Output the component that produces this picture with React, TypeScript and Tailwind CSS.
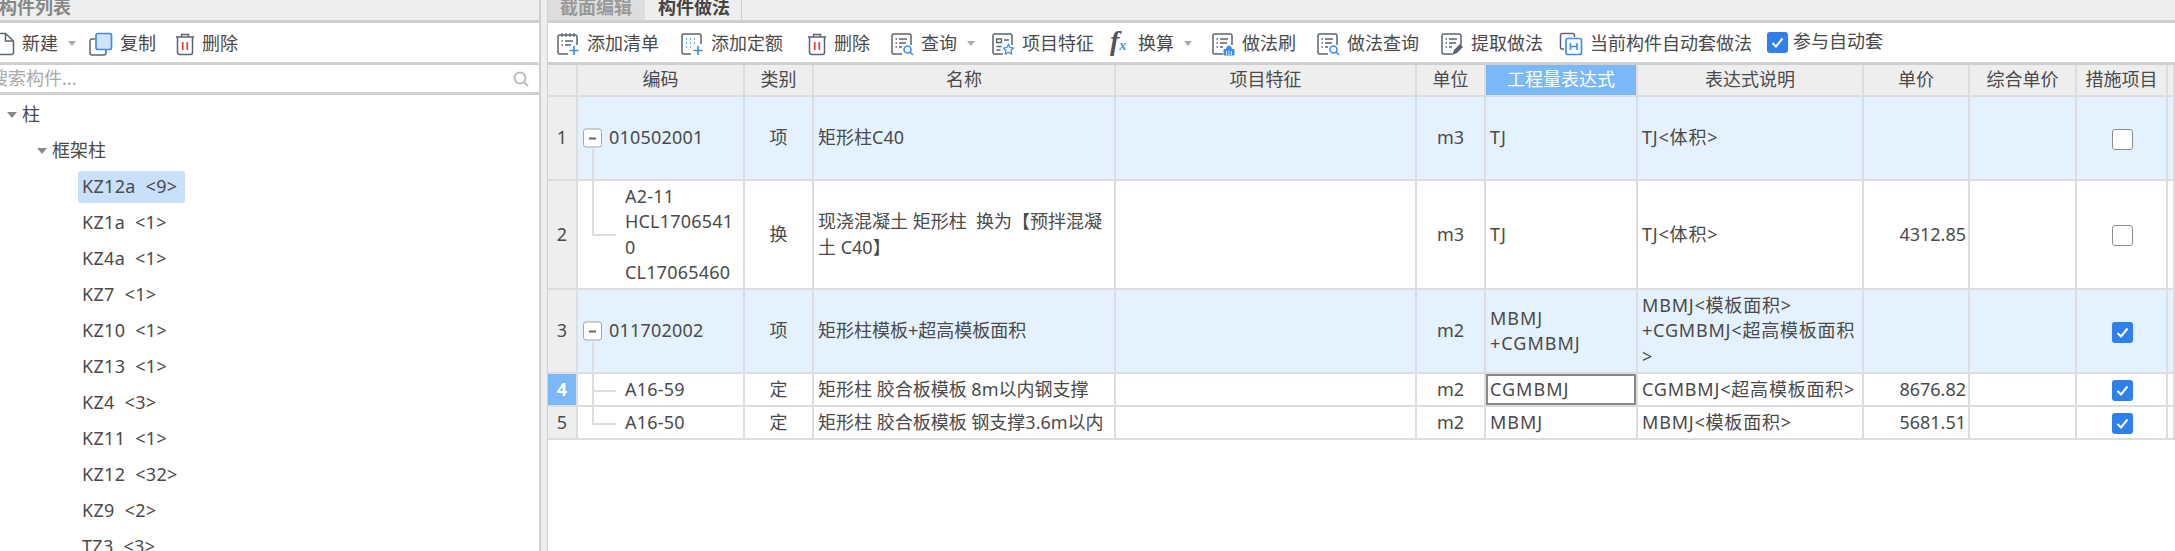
import React from "react";

const G = "#5b6472";
const B = "#3d8ef0";

function Doc({ children }: { children?: React.ReactNode }) {
  return (
    <svg width="24" height="24" viewBox="0 0 24 24" fill="none" strokeWidth="1.5" className="shrink-0">
      <path d="M12 22H3.500A1.500 1.500 0 0 1 2 20.500V3.500A1.500 1.500 0 0 1 3.500 2h16A1.500 1.500 0 0 1 21 3.500V13" stroke={G} />
      {children}
    </svg>
  );
}

const Lines = () => (
  <path d="M5.500 7h1.500M9 7h8M5.500 11h1.500M9 11h7M5.500 15h1.500M9 15h3" stroke={G} strokeWidth="1.300" />
);
const Plus = () => <path d="M18 14v9M13.500 18.500h9" stroke={B} strokeWidth="1.700" />;
const Search = () => (
  <g stroke={B} strokeWidth="1.600">
    <circle cx="17.500" cy="17.500" r="3.500" fill="#fff" />
    <path d="M20 20l3 3" />
  </g>
);

function IconAddList() {
  return (
    <svg width="24" height="24" viewBox="0 0 24 24" fill="none" strokeWidth="1.500" className="shrink-0">
      <path d="M12 22H3.500A1.500 1.500 0 0 1 2 20.500V4.500A1.500 1.500 0 0 1 3.500 3h16A1.500 1.500 0 0 1 21 4.500V13" stroke={G} />
      <path d="M6 1v4M10 1v4M14 1v4M18 1v4" stroke={G} strokeWidth="1.200" />
      <path d="M5.500 9h1.500M9 9h8M5.500 13h1.500M9 13h6" stroke={G} strokeWidth="1.300" />
      <Plus />
    </svg>
  );
}
function IconAddQuota() {
  return (
    <svg width="24" height="24" viewBox="0 0 24 24" fill="none" strokeWidth="1.500" className="shrink-0">
      <path d="M11 22H3.500A1.500 1.500 0 0 1 2 20.500V3.500A1.500 1.500 0 0 1 3.500 2h16A1.500 1.500 0 0 1 21 3.500V12" stroke={G} />
      <path d="M6 7h1M10 7h1M14 7h1M6 11h1M10 11h1M14 11h1M6 15h1M10 15h1" stroke={B} strokeWidth="1.400" />
      <Plus />
    </svg>
  );
}
function IconTrash() {
  return (
    <svg width="20" height="24" viewBox="0 0 20 24" fill="none" className="shrink-0">
      <path d="M1 5h18M6.500 5V2.500h7V5" stroke={G} strokeWidth="1.500" />
      <path d="M2.500 5v15.500A2 2 0 0 0 4.500 22.500h11a2 2 0 0 0 2-2V5" stroke={G} strokeWidth="1.500" />
      <path d="M7.700 10v8M12.300 10v8" stroke="#ea3b3b" strokeWidth="1.700" />
    </svg>
  );
}
function IconQuery() {
  return (
    <Doc>
      <Lines />
      <Search />
    </Doc>
  );
}
function IconFeature() {
  return (
    <Doc>
      <path d="M5.500 7h5v3.500h-5zM13 8h5M5.500 14.500h5M5.500 18h4" stroke={G} strokeWidth="1.300" />
      <path d="M17.500 12.500l1.600 3 3.400.6-2.400 2.400.5 3.400-3.100-1.500-3.100 1.500.5-3.400-2.400-2.400 3.400-.6z" stroke={B} strokeWidth="1.300" fill="#fff" />
    </Doc>
  );
}
function IconBrush() {
  return (
    <Doc>
      <Lines />
      <path d="M13 17.500h10V23H13zM15.500 17.500c0-2 1-3.500 2.500-3.500s2.500 1.500 2.500 3.500" fill={B} stroke={B} strokeWidth="1" />
      <path d="M15.500 19v4M18 19v4M20.500 19v4" stroke="#fff" strokeWidth=".8" />
    </Doc>
  );
}
function IconExtract() {
  return (
    <Doc>
      <Lines />
      <path d="M12 23l2-5 6-6 3 3-6 6z" fill={G} />
    </Doc>
  );
}
function IconAuto() {
  return (
    <svg width="24" height="24" viewBox="0 0 24 24" fill="none" className="shrink-0">
      <path d="M5 17H3A1.500 1.500 0 0 1 1.500 15.500V3A1.500 1.500 0 0 1 3 1.500h11A1.500 1.500 0 0 1 15.500 3V5" stroke={G} strokeWidth="1.500" />
      <rect x="7" y="6.500" width="15.500" height="16" rx="2" fill="#fff" stroke={B} strokeWidth="1.700" />
      <path d="M11.500 11v7M18 11v7M11.500 14.500H18" stroke={B} strokeWidth="1.600" />
    </svg>
  );
}
function IconNew() {
  return (
    <svg width="24" height="24" viewBox="0 0 24 24" fill="none" className="shrink-0">
      <path d="M3 1.500h11.500L22.500 9v11.500a2 2 0 0 1-2 2H3zM14.500 1.500V9h8" stroke={G} strokeWidth="1.500" />
    </svg>
  );
}
function IconCopy() {
  return (
    <svg width="24" height="24" viewBox="0 0 24 24" fill="none" className="shrink-0">
      <path d="M6 7H3a2 2 0 0 0-2 2v12a2 2 0 0 0 2 2h12a2 2 0 0 0 2-2v-3" stroke={G} strokeWidth="1.500" />
      <rect x="7" y="1.500" width="15.500" height="16" rx="2" fill="#cfe3fb" stroke={B} strokeWidth="1.700" />
    </svg>
  );
}

function Caret() {
  return (
    <svg width="8" height="5" viewBox="0 0 8 5" className="shrink-0 ml-[3px]">
      <path d="M0 0h8L4 5z" fill="#aaaaaa" />
    </svg>
  );
}

function Check() {
  return (
    <span className="inline-flex items-center justify-center w-[21px] h-[21px] rounded-[3px] bg-[#2f80ed] align-middle">
      <svg width="15" height="15" viewBox="0 0 15 15" fill="none">
        <path d="M2.500 8l3.500 3.500L12.500 3.500" stroke="#fff" strokeWidth="2" />
      </svg>
    </span>
  );
}
function Uncheck() {
  return <span className="inline-block w-[21px] h-[21px] rounded-[3px] bg-white border border-[#8c8c8c] align-middle" />;
}

function Tool({ icon, label, caret, className }: { icon: React.ReactNode; label: string; caret?: boolean; className?: string }) {
  return (
    <div className={`flex items-center gap-[7px] ${className ?? ""}`}>
      {icon}
      <span className="whitespace-nowrap">{label}</span>
      {caret && <Caret />}
    </div>
  );
}

function Expand() {
  return (
    <span className="absolute left-[5px] top-1/2 -translate-y-1/2 w-[19px] h-[19px] rounded-[3px] border border-[#a5a5a5] bg-white flex items-center justify-center">
      <span className="w-[7px] h-[2px] bg-[#666666]" />
    </span>
  );
}

const cols = [30, 167, 69, 302, 301, 69, 152, 226, 106, 107, 91, 7];
const heads = ["", "编码", "类别", "名称", "项目特征", "单位", "工程量表达式", "表达式说明", "单价", "综合单价", "措施项目", ""];

type Row = {
  h: string;
  blue: boolean;
  n: number;
  code: React.ReactNode;
  child: boolean;
  type: string;
  name: React.ReactNode;
  unit: string;
  expr: React.ReactNode;
  desc: React.ReactNode;
  price: string;
  checked: boolean;
  lines: React.ReactNode;
  selected?: boolean;
};

const rows: Row[] = [
  {
    h: "h-[84px]", blue: true, n: 1, code: "010502001", child: false, type: "项", name: "矩形柱C40", unit: "m3", expr: "TJ", desc: "TJ<体积>", price: "", checked: false,
    lines: <span className="absolute left-[14px] top-[52px] bottom-0 w-[2px] bg-[#dddddd]" />,
  },
  {
    h: "h-[109px]", blue: false, n: 2,
    code: <>A2-11<br />HCL1706541<br />0<br />CL17065460</>,
    child: true, type: "换",
    name: <>现浇混凝土 矩形柱&nbsp; 换为【预拌混凝<br />土 C40】</>,
    unit: "m3", expr: "TJ", desc: "TJ<体积>", price: "4312.85", checked: false,
    lines: (
      <>
        <span className="absolute left-[14px] top-0 h-[53px] w-[2px] bg-[#dddddd]" />
        <span className="absolute left-[14px] top-[53px] w-[24px] h-[2px] bg-[#dddddd]" />
      </>
    ),
  },
  {
    h: "h-[84px]", blue: true, n: 3, code: "011702002", child: false, type: "项", name: "矩形柱模板+超高模板面积", unit: "m2",
    expr: <>MBMJ<br />+CGMBMJ</>,
    desc: <>MBMJ&lt;模板面积&gt;<br />+CGMBMJ&lt;超高模板面积<br />&gt;</>,
    price: "", checked: true,
    lines: <span className="absolute left-[14px] top-[52px] bottom-0 w-[2px] bg-[#dddddd]" />,
  },
  {
    h: "h-[33px]", blue: false, n: 4, code: "A16-59", child: true, type: "定", name: "矩形柱 胶合板模板 8m以内钢支撑", unit: "m2", expr: "CGMBMJ", desc: "CGMBMJ<超高模板面积>", price: "8676.82", checked: true, selected: true,
    lines: (
      <>
        <span className="absolute left-[14px] top-0 bottom-0 w-[2px] bg-[#dddddd]" />
        <span className="absolute left-[14px] top-[16px] w-[24px] h-[2px] bg-[#dddddd]" />
      </>
    ),
  },
  {
    h: "h-[33px]", blue: false, n: 5, code: "A16-50", child: true, type: "定", name: "矩形柱 胶合板模板 钢支撑3.6m以内", unit: "m2", expr: "MBMJ", desc: "MBMJ<模板面积>", price: "5681.51", checked: true,
    lines: (
      <>
        <span className="absolute left-[14px] top-0 h-[16px] w-[2px] bg-[#dddddd]" />
        <span className="absolute left-[14px] top-[16px] w-[24px] h-[2px] bg-[#dddddd]" />
      </>
    ),
  },
];

const tree = ["KZ1a <1>", "KZ4a <1>", "KZ7 <1>", "KZ10 <1>", "KZ13 <1>", "KZ4 <3>", "KZ11 <1>", "KZ12 <32>", "KZ9 <2>", "TZ3 <3>"];

export default function App() {
  const cell = "border-r-2 border-b-2 border-[#dddddd] p-0";
  return (
    <div
      className="w-[2175px] h-[551px] overflow-hidden flex bg-[#eeeeee] text-[#4a4a4a] text-[18px] leading-[25.5px]"
      style={{ fontFamily: '"Noto Sans", "Noto Sans CJK SC", sans-serif' }}
    >
      {/* left panel */}
      <div className="w-[539px] shrink-0 flex flex-col overflow-hidden">
        <div className="h-[20px] shrink-0 overflow-hidden font-bold text-[#888888] -indent-[1px] leading-[14px]">构件列表</div>
        <div className="h-[42px] shrink-0 border-t-[3px] border-[#cfcfcf] bg-white flex items-center -ml-[9px] pt-[2px]">
          <Tool icon={<IconNew />} label="新建" caret />
          <Tool icon={<IconCopy />} label="复制" className="ml-[13px]" />
          <Tool icon={<IconTrash />} label="删除" className="ml-[19px]" />
        </div>
        <div className="h-[30px] shrink-0 border-t-[3px] border-[#cfcfcf] bg-white flex items-center justify-between rounded-r-[4px] pr-[10px]">
          <span className="-ml-[10px] text-[#aaaaaa]">搜索构件...</span>
          <svg width="16" height="16" viewBox="0 0 16 16" fill="none" stroke="#bdbdbd" strokeWidth="2">
            <circle cx="7" cy="7" r="5.500" />
            <path d="M11 11l4 4" />
          </svg>
        </div>
        <div className="flex-1 border-t-[3px] border-[#cfcfcf] bg-white pt-[2px] overflow-hidden">
          <div className="h-[36px] flex items-center pl-[7px] gap-[5px]">
            <svg width="10" height="6" viewBox="0 0 10 6"><path d="M0 0h10L5 6z" fill="#8a8a8a" /></svg>
            <span>柱</span>
          </div>
          <div className="h-[36px] flex items-center pl-[37px] gap-[5px]">
            <svg width="10" height="6" viewBox="0 0 10 6"><path d="M0 0h10L5 6z" fill="#8a8a8a" /></svg>
            <span>框架柱</span>
          </div>
          <div className="h-[36px] flex items-center pl-[78px]">
            <span className="w-[107px] h-[32px] flex items-center pl-[4px] rounded-[3px] bg-[#c9e0fb] whitespace-pre tracking-[0.3px]">KZ12a  {"<9>"}</span>
          </div>
          {tree.map((t) => (
            <div key={t} className="h-[36px] flex items-center pl-[82px] whitespace-pre tracking-[0.3px]">
              {t.replace(" ", "  ")}
            </div>
          ))}
        </div>
      </div>

      {/* divider */}
      <div className="w-[9px] shrink-0 border-l-2 border-r border-[#cfcfcf] bg-[#eeeeee]" />

      {/* right panel */}
      <div className="flex-1 min-w-0 flex flex-col overflow-hidden">
        <div className="h-[20px] shrink-0 flex font-bold leading-[14px] overflow-hidden">
          <div className="w-[97px] bg-[#dddddd] text-[#999999] pl-[12px]">截面编辑</div>
          <div className="w-[97px] border-r border-[#cfcfcf] pl-[13px] text-[#444444]">构件做法</div>
        </div>
        <div className="h-[42px] shrink-0 border-t-[3px] border-[#cfcfcf] bg-white flex items-center pl-[8px] pt-[2px]">
          <Tool icon={<IconAddList />} label="添加清单" />
          <Tool icon={<IconAddQuota />} label="添加定额" className="ml-[21px]" />
          <Tool icon={<IconTrash />} label="删除" className="ml-[24px]" />
          <Tool icon={<IconQuery />} label="查询" caret className="ml-[20px]" />
          <Tool icon={<IconFeature />} label="项目特征" className="ml-[16px]" />
          <div className="flex items-center gap-[7px] ml-[16px]">
            <span className="w-[21px] whitespace-nowrap italic font-bold text-[28px] leading-[24px] text-[#555555]" style={{ fontFamily: '"Liberation Serif", serif' }}>
              f<span className="text-[14px] text-[#3d8ef0]">x</span>
            </span>
            <span>换算</span>
            <Caret />
          </div>
          <Tool icon={<IconBrush />} label="做法刷" className="ml-[19px]" />
          <Tool icon={<IconQuery />} label="做法查询" className="ml-[20px]" />
          <Tool icon={<IconExtract />} label="提取做法" className="ml-[21px]" />
          <Tool icon={<IconAuto />} label="当前构件自动套做法" className="ml-[16px]" />
          <div className="flex items-center gap-[5px] ml-[15px] -mt-[3px]">
            <Check />
            <span>参与自动套</span>
          </div>
        </div>
        <div className="flex-1 border-t-[3px] border-[#cfcfcf] bg-white overflow-hidden">
          <table className="w-[1627px] table-fixed border-separate border-spacing-0">
            <colgroup>
              {cols.map((w, i) => (
                <col key={i} style={{ width: w }} />
              ))}
            </colgroup>
            <thead>
              <tr className="h-[32px]">
                {heads.map((h, i) => (
                  <th
                    key={i}
                    className={`${cell} font-normal text-center ${i === 6 ? "bg-[#7ab8f8] text-white" : "bg-[#eeeeee]"}`}
                  >
                    {h}
                  </th>
                ))}
              </tr>
            </thead>
            <tbody>
              {rows.map((r) => {
                const bg = r.blue ? "bg-[#e3f2fe]" : "bg-white";
                return (
                  <tr key={r.n} className={r.h}>
                    <td className={`${cell} text-center ${r.selected ? "bg-[#7ab8f8] text-white font-bold" : "bg-[#eeeeee]"}`}>{r.n}</td>
                    <td className={`${cell} ${bg} relative tracking-[0.2px] ${r.child ? "pl-[47px]" : "pl-[31px]"}`}>
                      {r.lines}
                      {!r.child && <Expand />}
                      <span className="relative block break-all">{r.code}</span>
                    </td>
                    <td className={`${cell} ${bg} text-center`}>{r.type}</td>
                    <td className={`${cell} ${bg} pl-[4px]`}>{r.name}</td>
                    <td className={`${cell} ${bg}`} />
                    <td className={`${cell} ${bg} text-center`}>{r.unit}</td>
                    <td className={`${cell} ${bg} pl-[4px] tracking-[1px] ${r.selected ? "shadow-[inset_0_0_0_2px_#888888]" : ""}`}>{r.expr}</td>
                    <td className={`${cell} ${bg} pl-[4px] whitespace-nowrap tracking-[0.8px]`}>{r.desc}</td>
                    <td className={`${cell} ${bg} text-right pr-[2px]`}>{r.price}</td>
                    <td className={`${cell} ${bg}`} />
                    <td className={`${cell} ${bg} text-center pl-[2px]`}>{r.checked ? <Check /> : <Uncheck />}</td>
                    <td className={`${cell} ${bg}`} />
                  </tr>
                );
              })}
            </tbody>
          </table>
        </div>
      </div>
    </div>
  );
}
